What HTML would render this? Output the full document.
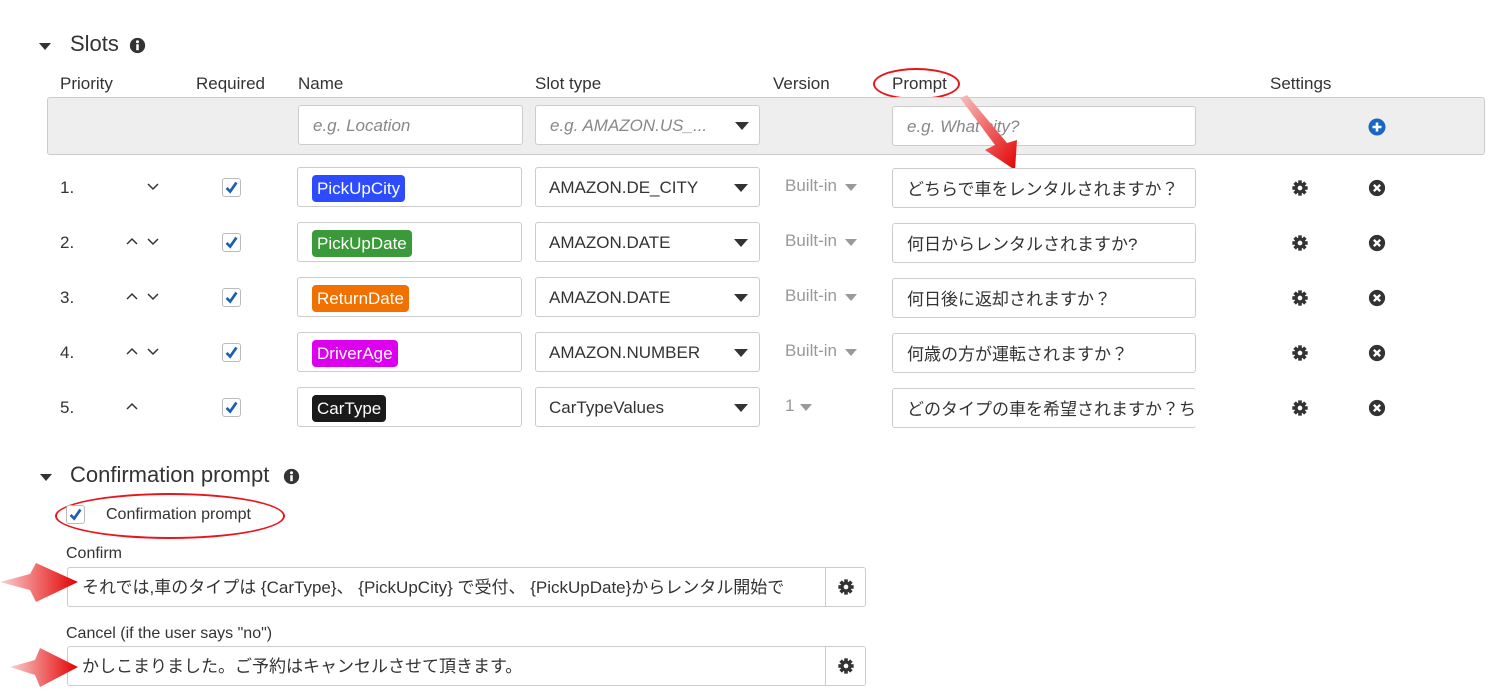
<!DOCTYPE html>
<html><head><meta charset="utf-8"><style>
*{box-sizing:border-box;margin:0;padding:0}
body{width:1490px;height:697px;background:#fff;position:relative;overflow:hidden;font-family:"Liberation Sans","Noto Sans CJK JP",sans-serif;color:#333;font-size:16px}
.a{position:absolute;white-space:nowrap}
.inp{position:absolute;border:1px solid #ccc;border-radius:3px;background:#fff;height:40px}
.ph{color:#888;font-style:italic}
.tag{position:absolute;left:14px;top:7px;height:27px;line-height:27px;padding:0 5px;border-radius:4px;color:#fff;font-size:17px}
.car{position:absolute;width:0;height:0;border-left:7px solid transparent;border-right:7px solid transparent;border-top:8px solid #333}
.cb{position:absolute;width:19px;height:19px;border:1px solid #bbb;border-radius:3px;background:#fff}
.gr{color:#999}
.sc{position:absolute;width:0;height:0;border-left:6px solid transparent;border-right:6px solid transparent;border-top:7px solid #999}
</style></head><body>
<svg width="0" height="0" style="position:absolute"><defs>
<symbol id="chk" viewBox="0 0 19 19"><path d="M4 10 L8 14 L15 4" stroke="#1a5fb4" stroke-width="3" fill="none"/></symbol>
<symbol id="gear" viewBox="0 0 20 20"><g fill="#333"><circle cx="10" cy="10" r="6"/><rect x="8" y="1.5" width="4" height="17"/><rect x="1.5" y="8" width="17" height="4"/><rect x="8" y="1.5" width="4" height="17" transform="rotate(45 10 10)"/><rect x="8" y="1.5" width="4" height="17" transform="rotate(-45 10 10)"/></g><circle cx="10" cy="10" r="2.6" fill="#fff"/></symbol>
<symbol id="xc" viewBox="0 0 20 20"><circle cx="10" cy="10" r="9" fill="#333"/><path d="M6.5 6.5 L13.5 13.5 M13.5 6.5 L6.5 13.5" stroke="#fff" stroke-width="2.6"/></symbol>
<symbol id="info" viewBox="0 0 20 20"><circle cx="10" cy="10" r="9" fill="#333"/><rect x="8.5" y="8.5" width="3" height="7" fill="#fff"/><circle cx="10" cy="5.6" r="1.8" fill="#fff"/></symbol>
</defs></svg>

<div class="car" style="left:39px;top:43px;border-width:7px 6px 0 6px"></div>
<div class="a" style="left:70px;top:31px;font-size:22px">Slots</div>
<svg class="a" style="left:129px;top:37px" width="17" height="17"><use href="#info"/></svg>

<div class="a" style="left:60px;top:74px;font-size:17px">Priority</div>
<div class="a" style="left:196px;top:74px;font-size:17px">Required</div>
<div class="a" style="left:298px;top:74px;font-size:17px">Name</div>
<div class="a" style="left:535px;top:74px;font-size:17px">Slot type</div>
<div class="a" style="left:773px;top:74px;font-size:17px">Version</div>
<div class="a" style="left:892px;top:74px;font-size:17px">Prompt</div>
<div class="a" style="left:1270px;top:74px;font-size:17px">Settings</div>
<div class="a" style="left:873px;top:68px;width:87px;height:32px;border:2px solid #e8161b;border-radius:50%"></div>

<div class="a" style="left:47px;top:97px;width:1438px;height:58px;background:#eee;border:1px solid #ccc;border-radius:3px"></div>
<div class="inp" style="left:298px;top:105px;width:225px"><span class="a ph" style="left:14px;top:10px;font-size:17px">e.g. Location</span></div>
<div class="inp" style="left:535px;top:105px;width:225px"><span class="a ph" style="left:14px;top:10px;font-size:17px">e.g. AMAZON.US_...</span><div class="car" style="left:199px;top:16px"></div></div>
<div class="inp" style="left:892px;top:106px;width:304px"><span class="a ph" style="left:14px;top:10px;font-size:17px">e.g. What city?</span></div>
<svg class="a" style="left:1368px;top:118px" width="18" height="18"><circle cx="9" cy="9" r="8.5" fill="#1a66c4"/><path d="M9 4.5V13.5M4.5 9H13.5" stroke="#fff" stroke-width="2.6"/></svg>

<svg class="a" style="left:955px;top:95px" width="70" height="80"><defs><linearGradient id="g1" x1="0" y1="0" x2="1" y2="1"><stop offset="0" stop-color="#f8c0c0"/><stop offset="1" stop-color="#e30000"/></linearGradient></defs><polygon points="5,3 40,50 30,55 60,75 62,45 52,48 12,0" fill="url(#g1)"/></svg>

<div class="a" style="left:60px;top:178px;font-size:17px">1.</div>
<div class="a" style="left:60px;top:233px;font-size:17px">2.</div>
<div class="a" style="left:60px;top:288px;font-size:17px">3.</div>
<div class="a" style="left:60px;top:343px;font-size:17px">4.</div>
<div class="a" style="left:60px;top:398px;font-size:17px">5.</div>

<svg class="a" style="left:120px;top:176px" width="45" height="250" fill="none" stroke="#333" stroke-width="1.5">
<path d="M28 8 L33 13 L38 8"/>
<path d="M7 68 L12 63 L17 68"/><path d="M28 63 L33 68 L38 63"/>
<path d="M7 123 L12 118 L17 123"/><path d="M28 118 L33 123 L38 118"/>
<path d="M7 178 L12 173 L17 178"/><path d="M28 173 L33 178 L38 173"/>
<path d="M7 233 L12 228 L17 233"/>
</svg>

<div class="cb" style="left:222px;top:178px"><svg width="17" height="17"><use href="#chk"/></svg></div>
<div class="cb" style="left:222px;top:233px"><svg width="17" height="17"><use href="#chk"/></svg></div>
<div class="cb" style="left:222px;top:288px"><svg width="17" height="17"><use href="#chk"/></svg></div>
<div class="cb" style="left:222px;top:343px"><svg width="17" height="17"><use href="#chk"/></svg></div>
<div class="cb" style="left:222px;top:398px"><svg width="17" height="17"><use href="#chk"/></svg></div>

<div class="inp" style="left:297px;top:167px;width:225px"><span class="tag" style="background:#2d4cff">PickUpCity</span></div>
<div class="inp" style="left:297px;top:222px;width:225px"><span class="tag" style="background:#3a9a3a">PickUpDate</span></div>
<div class="inp" style="left:297px;top:277px;width:225px"><span class="tag" style="background:#f07000">ReturnDate</span></div>
<div class="inp" style="left:297px;top:332px;width:225px"><span class="tag" style="background:#dd00ee">DriverAge</span></div>
<div class="inp" style="left:297px;top:387px;width:225px"><span class="tag" style="background:#1a1a1a">CarType</span></div>

<div class="inp" style="left:535px;top:167px;width:225px"><span class="a" style="left:13px;top:10px;font-size:17px">AMAZON.DE_CITY</span><div class="car" style="left:198px;top:16px"></div></div>
<div class="inp" style="left:535px;top:222px;width:225px"><span class="a" style="left:13px;top:10px;font-size:17px">AMAZON.DATE</span><div class="car" style="left:198px;top:16px"></div></div>
<div class="inp" style="left:535px;top:277px;width:225px"><span class="a" style="left:13px;top:10px;font-size:17px">AMAZON.DATE</span><div class="car" style="left:198px;top:16px"></div></div>
<div class="inp" style="left:535px;top:332px;width:225px"><span class="a" style="left:13px;top:10px;font-size:17px">AMAZON.NUMBER</span><div class="car" style="left:198px;top:16px"></div></div>
<div class="inp" style="left:535px;top:387px;width:225px"><span class="a" style="left:13px;top:10px;font-size:17px">CarTypeValues</span><div class="car" style="left:198px;top:16px"></div></div>

<div class="a gr" style="left:785px;top:176px;font-size:17px">Built-in</div><div class="sc" style="left:845px;top:184px"></div>
<div class="a gr" style="left:785px;top:231px;font-size:17px">Built-in</div><div class="sc" style="left:845px;top:239px"></div>
<div class="a gr" style="left:785px;top:286px;font-size:17px">Built-in</div><div class="sc" style="left:845px;top:294px"></div>
<div class="a gr" style="left:785px;top:341px;font-size:17px">Built-in</div><div class="sc" style="left:845px;top:349px"></div>
<div class="a gr" style="left:785px;top:396px;font-size:17px">1</div><div class="sc" style="left:800px;top:404px"></div>

<div class="inp" style="left:892px;top:168px;width:304px;overflow:hidden"><span class="a" style="left:14px;top:6px;font-size:17px">どちらで車をレンタルされますか？</span></div>
<div class="inp" style="left:892px;top:223px;width:304px;overflow:hidden"><span class="a" style="left:14px;top:6px;font-size:17px">何日からレンタルされますか?</span></div>
<div class="inp" style="left:892px;top:278px;width:304px;overflow:hidden"><span class="a" style="left:14px;top:6px;font-size:17px">何日後に返却されますか？</span></div>
<div class="inp" style="left:892px;top:333px;width:304px;overflow:hidden"><span class="a" style="left:14px;top:6px;font-size:17px">何歳の方が運転されますか？</span></div>
<div class="inp" style="left:892px;top:388px;width:304px;overflow:hidden;border-right:none"><span class="a" style="left:14px;top:6px;font-size:17px">どのタイプの車を希望されますか？ち</span></div>

<svg class="a" style="left:1291px;top:179px" width="18" height="18"><use href="#gear"/></svg>
<svg class="a" style="left:1291px;top:234px" width="18" height="18"><use href="#gear"/></svg>
<svg class="a" style="left:1291px;top:289px" width="18" height="18"><use href="#gear"/></svg>
<svg class="a" style="left:1291px;top:344px" width="18" height="18"><use href="#gear"/></svg>
<svg class="a" style="left:1291px;top:399px" width="18" height="18"><use href="#gear"/></svg>
<svg class="a" style="left:1368px;top:179px" width="18" height="18"><use href="#xc"/></svg>
<svg class="a" style="left:1368px;top:234px" width="18" height="18"><use href="#xc"/></svg>
<svg class="a" style="left:1368px;top:289px" width="18" height="18"><use href="#xc"/></svg>
<svg class="a" style="left:1368px;top:344px" width="18" height="18"><use href="#xc"/></svg>
<svg class="a" style="left:1368px;top:399px" width="18" height="18"><use href="#xc"/></svg>

<div class="car" style="left:40px;top:474px;border-width:7px 6px 0 6px"></div>
<div class="a" style="left:70px;top:462px;font-size:22px">Confirmation prompt</div>
<svg class="a" style="left:283px;top:468px" width="17" height="17"><use href="#info"/></svg>

<div class="a" style="left:55px;top:493px;width:230px;height:46px;border:2px solid #e8161b;border-radius:50%"></div>
<div class="cb" style="left:66px;top:505px"><svg width="17" height="17"><use href="#chk"/></svg></div>
<div class="a" style="left:106px;top:506px">Confirmation prompt</div>

<div class="a" style="left:66px;top:545px">Confirm</div>
<div class="inp" style="left:67px;top:567px;width:799px;overflow:hidden"><span class="a" style="left:14px;top:5px;font-size:17px">それでは,車のタイプは {CarType}、 {PickUpCity} で受付、 {PickUpDate}からレンタル開始で</span><div class="a" style="left:757px;top:0;width:41px;height:38px;background:#fff;border-left:1px solid #ccc"></div><svg class="a" style="left:769px;top:10px" width="18" height="18"><use href="#gear"/></svg></div>

<div class="a" style="left:66px;top:625px">Cancel (if the user says "no")</div>
<div class="inp" style="left:67px;top:646px;width:799px;overflow:hidden"><span class="a" style="left:14px;top:5px;font-size:17px">かしこまりました。ご予約はキャンセルさせて頂きます。</span><div class="a" style="left:757px;top:0;width:41px;height:38px;background:#fff;border-left:1px solid #ccc"></div><svg class="a" style="left:769px;top:10px" width="18" height="18"><use href="#gear"/></svg></div>

<svg class="a" style="left:0;top:560px" width="80" height="45"><defs><linearGradient id="g2" x1="0" y1="0" x2="1" y2="0"><stop offset="0" stop-color="#fbd0d0"/><stop offset="1" stop-color="#e30000"/></linearGradient></defs><polygon points="0,22 30,14 36,3 78,22 36,42 30,30" fill="url(#g2)"/></svg>
<svg class="a" style="left:10px;top:645px" width="70" height="45"><polygon points="0,22 25,15 30,3 68,22 30,42 25,30" fill="url(#g2)"/></svg>
</body></html>
